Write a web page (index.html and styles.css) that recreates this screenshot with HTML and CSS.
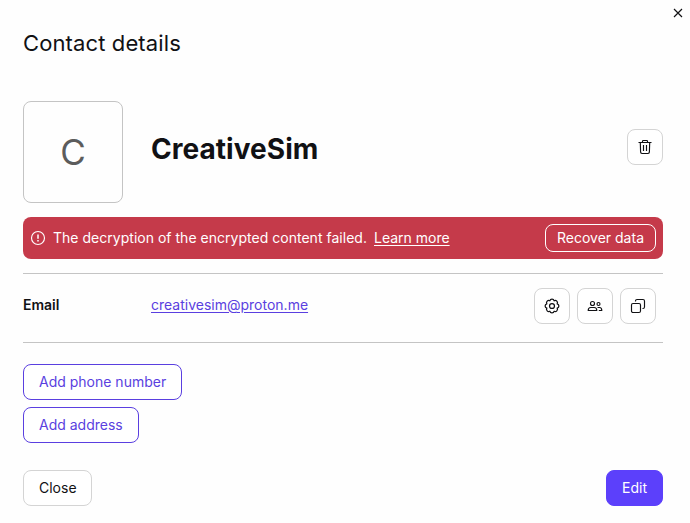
FILE: index.html
```html
<!DOCTYPE html>
<html lang="en">
<head>
    <meta charset="UTF-8">
    <meta name="viewport" content="width=device-width, initial-scale=1.0">
    <title>Contact details</title>
    <link rel="stylesheet" href="styles.css">
</head>
<body>
    <div class="modal">
        <button class="modal-close" aria-label="Close">
            <svg width="10" height="10" viewBox="0 0 10 10"><path d="M1 1l8 8M9 1L1 9"/></svg>
        </button>

        <h1>Contact details</h1>

        <div class="summary">
            <div class="avatar">C</div>
            <h2>CreativeSim</h2>
            <button class="btn btn-icon" aria-label="Delete">
                <svg width="16" height="16" viewBox="0 0 16 16"><path d="M1.5 3.5h13M5.5 3.5V2.3c0-.5.3-.8.8-.8h3.4c.5 0 .8.3.8.8v1.2M3.3 3.5l.3 9.6c0 .8.6 1.4 1.4 1.4h6c.8 0 1.4-.6 1.4-1.4l.3-9.6M6.5 6v6M9.5 6v6"/></svg>
            </button>
        </div>

        <div class="alert">
            <svg width="16" height="16" viewBox="0 0 16 16"><circle cx="8" cy="8" r="6.5"/><path class="mark" d="M8 4.5v4.3M8 10v1.5"/></svg>
            <span class="alert-text">The decryption of the encrypted content failed.</span>
            <a href="#">Learn more</a>
            <button class="btn btn-alert">Recover data</button>
        </div>

        <div class="row">
            <span class="label">Email</span>
            <a class="email" href="#">creativesim@proton.me</a>
            <div class="row-actions">
                <button class="btn btn-icon" aria-label="Email settings">
                    <svg width="16" height="16" viewBox="0.6 0.6 14.8 14.8"><circle cx="8" cy="8" r="2.3"/><path d="M12.8 6a2.06 2.06 0 0 1 0 4a2.06 2.06 0 0 1-2.8 2.8a2.06 2.06 0 0 1-4 0a2.06 2.06 0 0 1-2.8-2.8a2.06 2.06 0 0 1 0-4a2.06 2.06 0 0 1 2.8-2.8a2.06 2.06 0 0 1 4 0a2.06 2.06 0 0 1 2.8 2.8z"/></svg>
                </button>
                <button class="btn btn-icon" aria-label="Contact groups">
                    <svg width="16" height="16" viewBox="0 0 16 16"><circle cx="5.5" cy="5.5" r="2"/><circle cx="11.5" cy="6" r="1.5"/><path d="M1.2 12.5c0-2 1.1-3 2.6-3h3.4c1.5 0 2.6 1 2.6 3zM10.5 9.5h2c1.5 0 2.3 1.1 2.3 3h-3"/></svg>
                </button>
                <button class="btn btn-icon" aria-label="Copy email">
                    <svg width="16" height="16" viewBox="0 0 16 16"><rect x="1.5" y="5.5" width="9" height="9" rx="1.5"/><path d="M5.5 3.5V3c0-.8.7-1.5 1.5-1.5h6c.8 0 1.5.7 1.5 1.5v6c0 .8-.7 1.5-1.5 1.5h-.5"/></svg>
                </button>
            </div>
        </div>

        <div class="add-fields">
            <button class="btn btn-outline">Add phone number</button>
            <button class="btn btn-outline">Add address</button>
        </div>

        <div class="footer">
            <button class="btn btn-cancel">Close</button>
            <button class="btn btn-primary">Edit</button>
        </div>
    </div>
</body>
</html>
```
FILE: styles.css
```css
* {
    margin: 0;
    padding: 0;
    box-sizing: border-box;
}

body {
    font-family: Inter, "Liberation Sans", sans-serif;
    font-size: 14px;
    line-height: 20px;
    color: #111114;
    background: #fefefe;
}

.modal {
    position: relative;
    height: 523px;
    padding: 28px 27px 17px 23px;
    display: flex;
    flex-direction: column;
}

svg {
    display: block;
    flex-shrink: 0;
    fill: none;
    stroke: currentColor;
    stroke-width: 1.15;
    stroke-linejoin: round;
}

a {
    color: #5a3fe0;
    text-decoration: underline;
    text-underline-offset: 2px;
}

h1 {
    font-size: 22px;
    font-weight: 400;
    line-height: 30px;
    letter-spacing: 0.12px;
}

h2 {
    flex: 1;
    margin-left: 28px;
    font-size: 28px;
    font-weight: 700;
    line-height: 36px;
    letter-spacing: 0.04px;
}

.modal-close {
    position: absolute;
    top: 8px;
    right: 7px;
    border: none;
    background: none;
    color: #111114;
}

.summary {
    display: flex;
    align-items: center;
    margin-top: 43px;
}

.summary .btn {
    margin-bottom: 10px;
}

.summary h2 {
    margin-bottom: 7px;
}

.avatar {
    width: 100px;
    height: 102px;
    display: flex;
    align-items: center;
    justify-content: center;
    border: 1px solid #c4c4c4;
    border-radius: 8px;
    font-size: 35px;
    line-height: 42px;
    color: #5c5c5c;
}

.btn {
    height: 36px;
    padding: 0 15px;
    border: 1px solid #d4d4d4;
    border-radius: 8px;
    background: #fff;
    color: #111114;
    font: inherit;
    letter-spacing: inherit;
    white-space: nowrap;
}

.btn-icon {
    width: 36px;
    padding: 0;
    display: flex;
    align-items: center;
    justify-content: center;
}

.alert {
    display: flex;
    align-items: center;
    height: 42px;
    margin-top: 14px;
    padding: 0 7px;
    border-radius: 8px;
    background: #c53a4a;
    color: #fff;
}

.alert .mark {
    stroke-width: 1.5;
}

.alert-text {
    margin: 0 7px;
    letter-spacing: 0.02px;
}

.alert a {
    color: #fff;
}

.btn-alert {
    width: 111px;
    height: 28px;
    margin-left: auto;
    padding: 0 11px;
    border-color: #fff;
    background: transparent;
    color: #fff;
}

.row {
    display: flex;
    align-items: center;
    height: 70px;
    margin-top: 14px;
    padding: 0 7px 4px 0;
    border-top: 1px solid #c4c4c4;
    border-bottom: 1px solid #c4c4c4;
}

.label {
    width: 128px;
    margin-bottom: 2px;
    font-weight: 600;
}

.email {
    margin-bottom: 2px;
}

.row-actions {
    display: flex;
    gap: 7px;
    margin-left: auto;
}

.add-fields {
    display: flex;
    flex-direction: column;
    align-items: flex-start;
    gap: 7px;
    margin-top: 21px;
}

.btn-outline {
    border-color: #5a3fe0;
    color: #5a3fe0;
}

.footer {
    display: flex;
    justify-content: space-between;
    margin-top: auto;
}

.btn-cancel {
    width: 69px;
}

.btn-primary {
    border-color: #5c40fb;
    background: #5c40fb;
    color: #fff;
}
```
